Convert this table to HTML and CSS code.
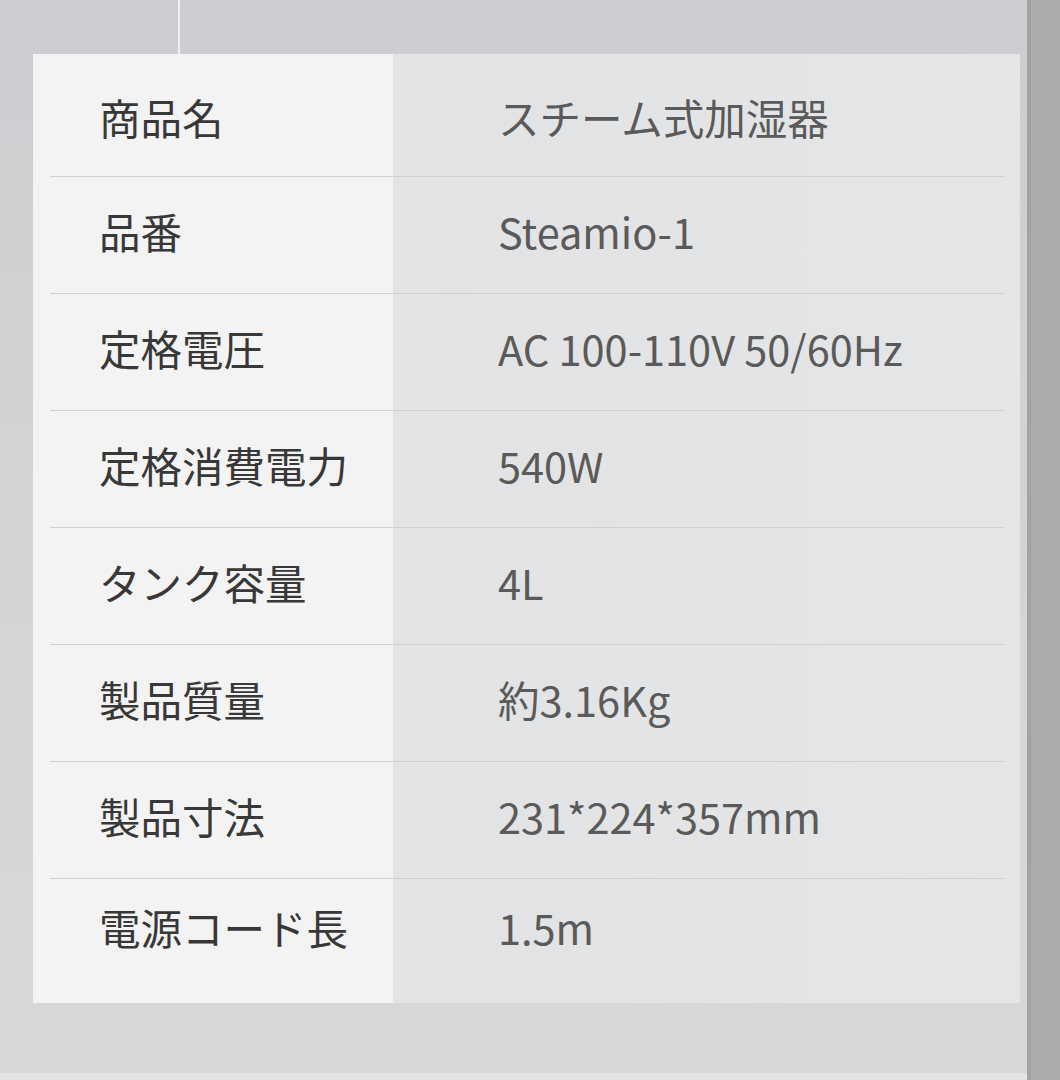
FILE: index.html
```html
<!DOCTYPE html>
<html lang="ja">
<head>
    <meta charset="UTF-8">
    <meta name="viewport" content="width=device-width, initial-scale=1.0">
    <title>製品仕様</title>
    <link rel="stylesheet" href="styles.css">
</head>
<body>
    <div class="page">
        <div class="spec-card">
            <div class="spec-row"><div class="label">商品名</div><div class="value">スチーム式加湿器</div></div>
            <div class="spec-row"><div class="label">品番</div><div class="value">Steamio-1</div></div>
            <div class="spec-row"><div class="label">定格電圧</div><div class="value">AC 100-110V 50/60Hz</div></div>
            <div class="spec-row"><div class="label">定格消費電力</div><div class="value">540W</div></div>
            <div class="spec-row"><div class="label">タンク容量</div><div class="value">4L</div></div>
            <div class="spec-row"><div class="label">製品質量</div><div class="value">約3.16Kg</div></div>
            <div class="spec-row"><div class="label">製品寸法</div><div class="value">231*224*357mm</div></div>
            <div class="spec-row"><div class="label">電源コード長</div><div class="value">1.5m</div></div>
        </div>
    </div>
</body>
</html>
```

FILE: styles.css
```css
html, body {
    margin: 0;
    padding: 0;
}
body {
    width: 1060px;
    height: 1080px;
    overflow: hidden;
    font-family: "Noto Sans CJK JP", "Noto Sans", sans-serif;
    background:
        linear-gradient(to right, transparent 1027px, #a3a3a3 1027px, #a3a3a3 1031px, #ababab 1031px),
        linear-gradient(to bottom, transparent 1073px, #e2e4e5 1073px),
        linear-gradient(to bottom, #cbcdd0 0, #d3d5d6 60%, #d6d8d9 100%);
}
.page {
    position: relative;
    padding: 54px 0 0 33px;
}
/* thin light line above the card */
.page::before {
    content: "";
    position: absolute;
    left: 178px;
    top: 0;
    width: 2px;
    height: 54px;
    background: #eef0f1;
}
.spec-card {
    width: 987px;
    box-sizing: border-box;
    padding: 6px 15px 7px 17px;
    background: linear-gradient(to right, #f3f3f3 0, #f3f3f3 360px, #e2e3e4 360px, #e4e5e6 100%);
}
.spec-row {
    display: grid;
    grid-template-columns: 448px 1fr;
    align-items: center;
    height: 117px;
    box-sizing: border-box;
    padding-bottom: 7px;
    border-bottom: 1px solid #cfd0d1;
    line-height: 1.2;
    font-size: 41.5px;
}
.spec-row:first-child {
    padding-bottom: 0;
}
.spec-row:last-child {
    padding-bottom: 20px;
    border-bottom: none;
}
.label {
    padding-left: 49px;
    color: #383838;
}
.value {
    color: #5a5a5a;
}
```
